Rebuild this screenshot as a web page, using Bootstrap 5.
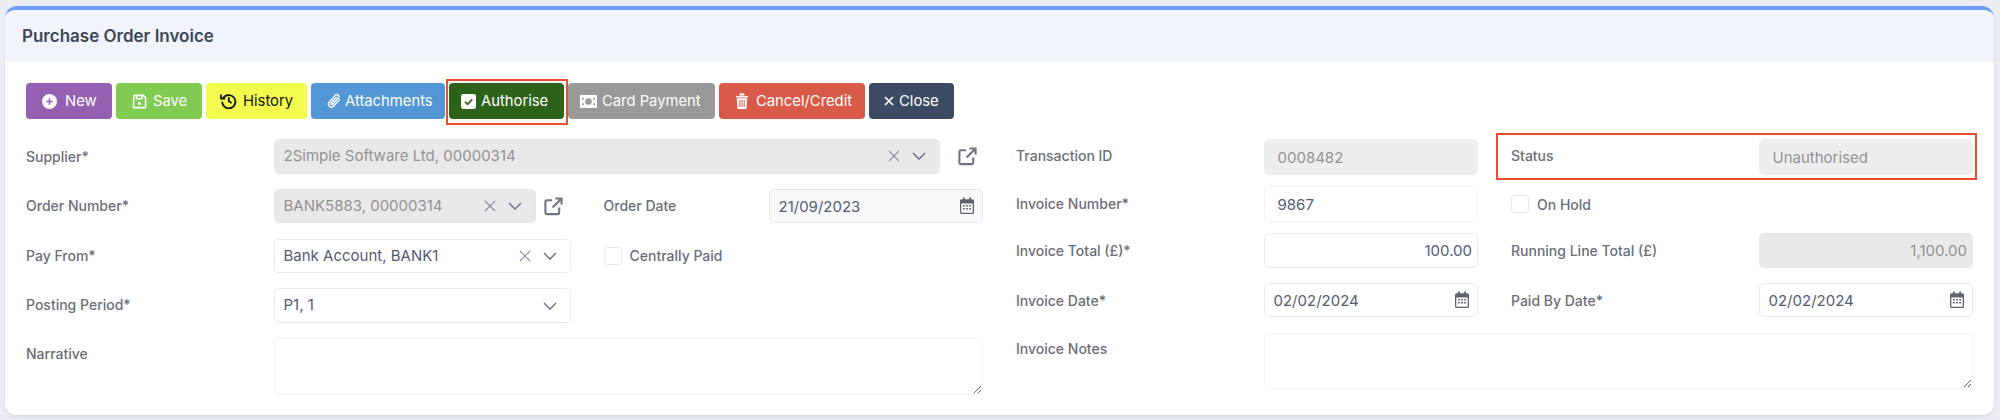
<!DOCTYPE html>
<html lang="en">
<head>
<meta charset="utf-8">
<title>Purchase Order Invoice</title>
<link rel="stylesheet" href="https://cdn.jsdelivr.net/npm/bootstrap@5.3.0/dist/css/bootstrap.min.css">
<style>
html,body{height:420px;overflow:hidden}
body{background:#eceef4;font-family:Inter,"Liberation Sans",sans-serif;font-size:14px;color:#545b70}
.po-card{margin:6px 6px 0 5px;height:409px;border:0;border-top:4px solid #6aa1f2;border-radius:12px;box-shadow:0 2px 4px rgba(60,70,100,.12);overflow:hidden}
.po-head{height:52px;background:#f1f4fa;border:0;border-radius:0!important;padding:1px 17px 0;display:flex;align-items:center}
.po-title{font-size:17px;font-weight:600;color:#3e4757;margin:0}
.po-body{padding:21px 21px 0}
.po-btn{height:36px;padding:0 15px;font-size:14.8px;font-weight:400;border:1px solid transparent;border-radius:4px;display:inline-flex;align-items:center;gap:7px;color:#fff;white-space:nowrap;--bs-btn-hover-color:#fff}
.po-btn svg{flex:none}
.po-new{width:86px;background:#9560b1;gap:8px}.po-save{width:86px;background:#80cc52;gap:6px}.po-hist{width:101px;background:#f3fb4c;color:#111;--bs-btn-hover-color:#111;padding:0 13px;gap:6px}.po-att{width:134px;background:#5296d6;gap:4px}.po-auth{width:115px;background:#2d6219;gap:5px;padding:0 11px;position:relative}.po-card-pay{width:147px;background:#999;gap:5px;padding:0 11px}.po-cancel{width:146px;background:#d95a48}.po-close{width:85px;background:#3a4b63;gap:5px;padding:0 14px}
.po-bar{gap:4px;margin-bottom:20px}
.po-auth::after{content:"";position:absolute;left:-4px;right:-5px;top:-5px;bottom:-7px;border:2px solid #ef4b2d;pointer-events:none}
.po-row{--bs-gutter-x:33px}
.fld{margin-bottom:15.3px;align-items:center}
.fld.tight{margin-bottom:11px}
.lbl{color:#6b6e78;font-weight:500;font-size:14px;margin:0}
.lbl.up{margin-bottom:2px}
.lbl.up2{margin-bottom:4px}
.lbl-top{align-self:flex-start;padding-top:5px}
.inp{height:34.5px;border:1px solid #e6e9f2;border-radius:5px;padding:0 9px;font-size:15px;color:#545b70;box-shadow:none}
.inp.tall{height:36px;padding-left:13px}
.inp.off{background:#e9e9e9;border-color:#e4e6ea;color:#929292;opacity:1}
.inp.off2{background:#eeeeee;border-color:#eeeeee;color:#929292;opacity:1}
.inp.soft{background:#f7f9fb}
.inp.thin{border-color:#f2f3f7}
.pick{display:flex;align-items:center;padding-right:13px}
.pick .val{flex:1;white-space:nowrap;overflow:hidden}
.pick .clr{margin-right:12px;flex:none;color:#8a91a3}
.pick .chev{flex:none;color:#5d6780}
.pop{flex:none;color:#6c7480}
.pop-wide{margin:0 6px 0 18px}
.pop-small{margin:0 8px 0 8px}
.datebox{position:relative}
.datebox svg{position:absolute;right:9px;top:8px;color:#5e6470;pointer-events:none}
.area{height:56.8px;min-height:0;border-color:#f2f3f7;resize:both;box-shadow:none;border-radius:5px}
.po-check{width:18px;height:18px;margin:0 8px 0 0;border:1px solid #e4e6ee;border-radius:4px;flex:none}
.chk-wrap{display:flex;align-items:center}
.status-mark{position:relative}
.status-mark::after{content:"";position:absolute;left:496.5px;right:12.5px;top:-6px;bottom:-5px;border:2px solid #ef4b2d;pointer-events:none}
.rt{text-align:right;padding-right:5px}
</style>
</head>
<body>
<div class="card po-card">
  <div class="card-header po-head"><h1 class="po-title">Purchase Order Invoice</h1></div>
  <div class="card-body po-body">
    <div class="d-flex po-bar">
      <button class="btn po-btn po-new" type="button"><svg width="15" height="15" viewBox="0 0 16 16"><circle cx="8" cy="8" r="8" fill="#fff"/><path d="M8 4.600v6.800M4.600 8h6.800" stroke="#9560b1" stroke-width="1.600"/></svg>New</button>
      <button class="btn po-btn po-save" type="button"><svg width="15" height="15" viewBox="0 0 16 16" fill="none" stroke="#fff" stroke-width="1.700"><path d="M2 1.500h10l2.500 2.500v10.500h-13z" stroke-linejoin="round"/><path d="M4.800 1.500v3.600h5.800V1.500"/><circle cx="8" cy="10" r="1.700" fill="#fff" stroke="none"/></svg>Save</button>
      <button class="btn po-btn po-hist" type="button"><svg width="17" height="16" viewBox="0 0 17 16" fill="none" stroke="#111" stroke-width="1.800"><path d="M3.200 5.200A6.600 6.600 0 1 1 2.200 8.800"/><path d="M1 1.400v4.200h4.200" stroke-linejoin="round"/><path d="M8.800 4.300v4l2.800 1.800"/></svg>History</button>
      <button class="btn po-btn po-att" type="button"><svg width="14" height="16" viewBox="0 0 14 16" fill="none" stroke="#fff" stroke-width="1.400" stroke-linecap="round"><path d="M12.600 6.600 6.700 13a3 3 0 0 1-4.400-4.100L8.300 2.400a2 2 0 0 1 3 2.700L5.600 11.300a1 1 0 0 1-1.500-1.300L9.300 4.400"/></svg>Attachments</button>
      <button class="btn po-btn po-auth" type="button"><svg width="15" height="15" viewBox="0 0 16 16"><rect width="16" height="16" rx="2.500" fill="#fff"/><path d="M4.200 8.200 7 11l5-5.200" fill="none" stroke="#2d6219" stroke-width="1.800"/></svg>Authorise</button>
      <button class="btn po-btn po-card-pay" type="button"><svg width="17" height="13" viewBox="0 0 17 13"><path fill-rule="evenodd" fill="#fff" d="M0 0h17v13H0zM8.500 3.300a3.200 3.200 0 1 0 0 6.400 3.200 3.200 0 0 0 0-6.400zM2 3v2a2 2 0 0 0 2-2zm13 0h-2a2 2 0 0 0 2 2zM2 10h2a2 2 0 0 0-2-2zm13 0V8a2 2 0 0 0-2 2z"/></svg>Card Payment</button>
      <button class="btn po-btn po-cancel" type="button"><svg width="14" height="16" viewBox="0 0 14 16"><path fill="#fff" d="M1 3h12v1.500H1zM4.500 1.200 5.300.2h3.400l.8 1v1.300h-5zM1.800 5.300h10.400L11.500 16h-9z"/><path d="M4.800 7v7M7 7v7M9.200 7v7" stroke="#d95a48" stroke-width="1"/></svg>Cancel/Credit</button>
      <button class="btn po-btn po-close" type="button"><svg width="10" height="10" viewBox="0 0 10 10"><path d="M1 1l8 8M9 1 1 9" stroke="#fff" stroke-width="1.700"/></svg>Close</button>
    </div>

    <div class="row po-row">
      <div class="col-6">
        <div class="row po-row fld">
          <label class="col-3 lbl">Supplier*</label>
          <div class="col-9 d-flex align-items-center">
            <div class="form-control inp off pick flex-grow-1 w-auto"><span class="val">2Simple Software Ltd, 00000314</span><svg class="clr" width="12" height="12" viewBox="0 0 12 12"><path d="M1 1l10 10M11 1 1 11" stroke="currentColor" stroke-width="1.100"/></svg><svg class="chev" width="14" height="8" viewBox="0 0 14 8"><path d="M1 1l6 6 6-6" fill="none" stroke="currentColor" stroke-width="1.300"/></svg></div>
            <svg class="pop pop-wide" width="19" height="19" viewBox="0 0 20 20" fill="none" stroke="currentColor" stroke-width="2.200"><path d="M8.500 3.500H3a1.500 1.500 0 0 0-1.500 1.500v11.500A1.500 1.500 0 0 0 3 18h11.500a1.500 1.500 0 0 0 1.500-1.500V11"/><path d="M12 1.500h6.500V8M18 2l-9 9"/></svg>
          </div>
        </div>
        <div class="row po-row fld">
          <label class="col-3 lbl up">Order Number*</label>
          <div class="col-4 d-flex align-items-center">
            <div class="form-control inp off pick flex-grow-1 w-auto"><span class="val">BANK5883, 00000314</span><svg class="clr" width="12" height="12" viewBox="0 0 12 12"><path d="M1 1l10 10M11 1 1 11" stroke="currentColor" stroke-width="1.100"/></svg><svg class="chev" width="14" height="8" viewBox="0 0 14 8"><path d="M1 1l6 6 6-6" fill="none" stroke="currentColor" stroke-width="1.300"/></svg></div>
            <svg class="pop pop-small" width="19" height="19" viewBox="0 0 20 20" fill="none" stroke="currentColor" stroke-width="2.200"><path d="M8.500 3.500H3a1.500 1.500 0 0 0-1.500 1.500v11.500A1.500 1.500 0 0 0 3 18h11.500a1.500 1.500 0 0 0 1.500-1.500V11"/><path d="M12 1.500h6.500V8M18 2l-9 9"/></svg>
          </div>
          <label class="col-2 lbl up">Order Date</label>
          <div class="col-3"><div class="datebox"><input class="form-control inp soft" type="text" value="21/09/2023" aria-label="Order Date"><svg width="14" height="17" viewBox="0 0 14 17"><use href="#cal"/></svg></div></div>
        </div>
        <div class="row po-row fld">
          <label class="col-3 lbl">Pay From*</label>
          <div class="col-4"><div class="form-control inp pick"><span class="val">Bank Account, BANK1</span><svg class="clr" width="12" height="12" viewBox="0 0 12 12"><path d="M1 1l10 10M11 1 1 11" stroke="currentColor" stroke-width="1.100"/></svg><svg class="chev" width="14" height="8" viewBox="0 0 14 8"><path d="M1 1l6 6 6-6" fill="none" stroke="currentColor" stroke-width="1.300"/></svg></div></div>
          <div class="col-5 chk-wrap"><input class="form-check-input po-check" type="checkbox" id="cp"><label class="lbl" for="cp">Centrally Paid</label></div>
        </div>
        <div class="row po-row fld">
          <label class="col-3 lbl up">Posting Period*</label>
          <div class="col-4"><div class="form-control inp pick"><span class="val">P1, 1</span><svg class="chev" width="14" height="8" viewBox="0 0 14 8"><path d="M1 1l6 6 6-6" fill="none" stroke="currentColor" stroke-width="1.300"/></svg></div></div>
        </div>
        <div class="row po-row fld">
          <label class="col-3 lbl lbl-top">Narrative</label>
          <div class="col-9"><textarea class="form-control area" aria-label="Narrative"></textarea></div>
        </div>
      </div>

      <div class="col-6">
        <div class="row po-row fld tight status-mark">
          <label class="col-3 lbl up2">Transaction ID</label>
          <div class="col-3"><input class="form-control inp tall off2" type="text" value="0008482" disabled aria-label="Transaction ID"></div>
          <label class="col-3 lbl up2">Status</label>
          <div class="col-3"><input class="form-control inp tall off2" type="text" value="Unauthorised" disabled aria-label="Status"></div>
        </div>
        <div class="row po-row fld tight">
          <label class="col-3 lbl up">Invoice Number*</label>
          <div class="col-3"><input class="form-control inp tall thin" type="text" value="9867" aria-label="Invoice Number"></div>
          <div class="col-6 chk-wrap"><input class="form-check-input po-check" type="checkbox" id="oh"><label class="lbl" for="oh">On Hold</label></div>
        </div>
        <div class="row po-row fld">
          <label class="col-3 lbl">Invoice Total (£)*</label>
          <div class="col-3"><input class="form-control inp rt" type="text" value="100.00" aria-label="Invoice Total"></div>
          <label class="col-3 lbl">Running Line Total (£)</label>
          <div class="col-3"><input class="form-control inp off rt" type="text" value="1,100.00" disabled aria-label="Running Line Total"></div>
        </div>
        <div class="row po-row fld">
          <label class="col-3 lbl">Invoice Date*</label>
          <div class="col-3"><div class="datebox"><input class="form-control inp" type="text" value="02/02/2024" aria-label="Invoice Date"><svg width="14" height="17" viewBox="0 0 14 17"><use href="#cal"/></svg></div></div>
          <label class="col-3 lbl">Paid By Date*</label>
          <div class="col-3"><div class="datebox"><input class="form-control inp" type="text" value="02/02/2024" aria-label="Paid By Date"><svg width="14" height="17" viewBox="0 0 14 17"><use href="#cal"/></svg></div></div>
        </div>
        <div class="row po-row fld">
          <label class="col-3 lbl lbl-top">Invoice Notes</label>
          <div class="col-9"><textarea class="form-control area" aria-label="Invoice Notes"></textarea></div>
        </div>
      </div>
    </div>
  </div>
</div>
<svg width="0" height="0" class="d-block" aria-hidden="true"><defs><g id="cal"><path fill="currentColor" d="M3 .5h1.800v2.500H3zM9.200.5H11v2.500H9.200zM1.500 2.300h11A1.500 1.500 0 0 1 14 3.800v11.700a1.500 1.500 0 0 1-1.500 1.500h-11A1.500 1.500 0 0 1 0 15.500V3.800a1.500 1.500 0 0 1 1.500-1.500z"/><path fill="#fff" d="M1.300 6.500h11.400v8.900a.4.400 0 0 1-.4.400H1.700a.4.400 0 0 1-.4-.4z"/><path fill="currentColor" d="M3 8h1.800v1.500H3zM6.100 8h1.800v1.500H6.100zM9.200 8H11v1.500H9.200zM3 11h1.800v1.500H3zM6.100 11h1.800v1.500H6.100zM9.200 11H11v1.500H9.200z"/></g></defs></svg>
<script src="https://cdn.jsdelivr.net/npm/bootstrap@5.3.0/dist/js/bootstrap.bundle.min.js"></script>
</body>
</html>
